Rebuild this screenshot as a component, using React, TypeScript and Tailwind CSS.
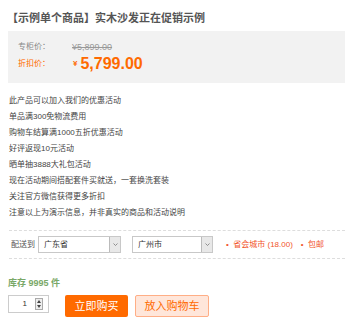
const promos = [
  '此产品可以加入我们的优惠活动',
  '单品满300免物流费用',
  '购物车结算满1000五折优惠活动',
  '好评返现10元活动',
  '晒单抽3888大礼包活动',
  '现在活动期间搭配套件买就送，一套换洗套装',
  '关注官方微信获得更多折扣',
  '注意以上为演示信息，并非真实的商品和活动说明',
]

function FakeSelect({ value, width }: { value: string; width: string }) {
  return (
    <div className={`flex h-[17px] ${width} shrink-0 items-stretch border border-[#c8c8c8] bg-white`}>
      <div className="flex-1 pl-[5px] text-[8px] leading-[15px] text-[#333]">{value}</div>
      <div className="flex w-[11px] items-center justify-center border-l border-[#bbb] bg-[#e8e8e8]">
        <svg width="5" height="3" viewBox="0 0 5 3">
          <path d="M0.5 0.5 L2.5 2.5 L4.5 0.5" fill="none" stroke="#777" strokeWidth="0.8" />
        </svg>
      </div>
    </div>
  )
}

export default function App() {
  return (
    <div
      className="h-[334px] w-[345px] overflow-hidden bg-white"
      style={{ fontFamily: '"Liberation Sans", "Noto Sans CJK SC", sans-serif' }}
    >
      <h1 className="pl-[7px] pt-[11px] text-[11px] font-bold leading-[14px] text-[#555]">
        【示例单个商品】实木沙发正在促销示例
      </h1>

      <div className="ml-2 mt-[6px] h-[52px] bg-[#f2f2f2] pl-[10px] pt-[10px]">
        <div className="flex items-center text-[8px] leading-[12px]">
          <span className="w-[54px] text-[#888]">专柜价：</span>
          <span className="text-[9px] text-[#999] line-through">¥5,899.00</span>
        </div>
        <div className="mt-[1px] flex items-center leading-[20px]">
          <span className="w-[55px] text-[8px] text-[#ff6a00]">折扣价：</span>
          <span className="mr-[3px] text-[8px] font-bold text-[#ff6a00]">¥</span>
          <span className="text-[16px] font-bold text-[#ff6a00]">5,799.00</span>
        </div>
      </div>

      <ul className="mt-[10px] pl-[9px] text-[8px] leading-[16px] text-[#444]">
        {promos.map((p) => (
          <li key={p}>{p}</li>
        ))}
      </ul>

      <div className="ml-[9px] mt-[9px] border-y border-dashed border-[#ddd] pb-[5px] pt-[5px]">
        <div className="flex items-center whitespace-nowrap">
          <span className="ml-[2px] w-[27px] text-[8px] text-[#555]">配送到</span>
          <FakeSelect value="广东省" width="w-[83px]" />
          <div className="ml-[11px]">
            <FakeSelect value="广州市" width="w-[81px]" />
          </div>
          <span className="ml-[13px] text-[8px] text-[#f2552c]">•&nbsp;&nbsp;省会城市 (18.00)</span>
          <span className="ml-[8px] text-[8px] text-[#f2552c]">•&nbsp;&nbsp;包邮</span>
        </div>
      </div>

      <div className="ml-2 mt-[18px] text-[9px] font-bold leading-[12px] text-[#7aa868]">库存 9995 件</div>

      <div className="ml-2 mt-[6px] flex items-start">
        <div className="flex h-[18px] w-[41px] items-center border border-[#ccc] bg-white">
          <span className="w-[26px] pr-[8px] text-right text-[8px] text-[#333]">1</span>
          <div className="flex h-[12px] w-[8px] flex-col items-center justify-between border border-[#aaa] bg-[#eee] py-[1px]">
            <svg width="4" height="3" viewBox="0 0 4 3">
              <path d="M0 3 L2 0 L4 3 Z" fill="#444" />
            </svg>
            <svg width="4" height="3" viewBox="0 0 4 3">
              <path d="M0 0 L2 3 L4 0 Z" fill="#444" />
            </svg>
          </div>
        </div>
        <button className="ml-4 h-[22px] w-[63px] rounded-[2px] bg-[#ff6a00] text-[11px] text-white">立即购买</button>
        <button className="ml-[7px] h-[22px] w-[74px] rounded-[2px] border border-[#ffae86] bg-[#ffe6da] text-[11px] text-[#ff6a00]">
          放入购物车
        </button>
      </div>
    </div>
  )
}
